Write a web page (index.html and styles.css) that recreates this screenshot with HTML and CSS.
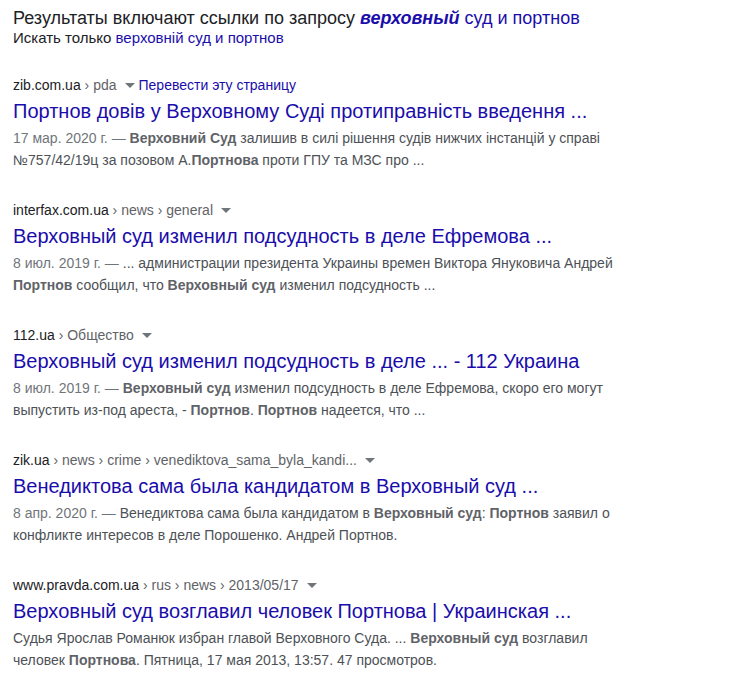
FILE: index.html
```html
<!DOCTYPE html>
<html lang="ru">
<head>
    <meta charset="UTF-8">
    <meta name="viewport" content="width=device-width, initial-scale=1.0">
    <title>верховний суд и портнов</title>
    <link rel="stylesheet" href="styles.css">
</head>
<body>
    <div class="spell">
        <p class="spell-main">Результаты включают ссылки по запросу <a href="#"><b><i>верховный</i></b> суд и портнов</a></p>
        <p class="spell-alt">Искать только <a href="#">верховній суд и портнов</a></p>
    </div>

    <div class="results">
        <div class="result">
            <div class="cite">zib.com.ua&nbsp;<span class="path">› pda</span><span class="arrow"></span><a class="translate" href="#">Перевести эту страницу</a></div>
            <a class="title" href="#">Портнов довів у Верховному Суді протиправність введення ...</a>
            <div class="snippet"><span class="date">17 мар. 2020 г. —</span> <b>Верховний Суд</b> залишив в силі рішення судів нижчих інстанцій у справі №757/42/19ц за позовом А.<b>Портнова</b> проти ГПУ та МЗС про ...</div>
        </div>

        <div class="result">
            <div class="cite">interfax.com.ua&nbsp;<span class="path">› news › general</span><span class="arrow"></span></div>
            <a class="title" href="#">Верховный суд изменил подсудность в деле Ефремова ...</a>
            <div class="snippet"><span class="date">8 июл. 2019 г. —</span> ... администрации президента Украины времен Виктора Януковича Андрей <b>Портнов</b> сообщил, что <b>Верховный суд</b> изменил подсудность ...</div>
        </div>

        <div class="result">
            <div class="cite">112.ua&nbsp;<span class="path">› Общество</span><span class="arrow"></span></div>
            <a class="title" href="#">Верховный суд изменил подсудность в деле ... - 112 Украина</a>
            <div class="snippet"><span class="date">8 июл. 2019 г. —</span> <b>Верховный суд</b> изменил подсудность в деле Ефремова, скоро его могут выпустить из-под ареста, - <b>Портнов</b>. <b>Портнов</b> надеется, что ...</div>
        </div>

        <div class="result">
            <div class="cite">zik.ua&nbsp;<span class="path">› news › crime › venediktova_sama_byla_kandi...</span><span class="arrow"></span></div>
            <a class="title" href="#">Венедиктова сама была кандидатом в Верховный суд ...</a>
            <div class="snippet"><span class="date">8 апр. 2020 г. —</span> Венедиктова сама была кандидатом в <b>Верховный суд</b>: <b>Портнов</b> заявил о конфликте интересов в деле Порошенко. Андрей Портнов.</div>
        </div>

        <div class="result">
            <div class="cite">www.pravda.com.ua&nbsp;<span class="path">› rus › news › 2013/05/17</span><span class="arrow"></span></div>
            <a class="title" href="#">Верховный суд возглавил человек Портнова | Украинская ...</a>
            <div class="snippet">Судья Ярослав Романюк избран главой Верховного Суда. ... <b>Верховный суд</b> возглавил человек <b>Портнова</b>. Пятница, 17 мая 2013, 13:57. 47 просмотров.</div>
        </div>
    </div>
</body>
</html>
```

FILE: styles.css
```css
body {
    margin: 0;
    padding: 7px 13px;
    font-family: Arial, "Liberation Sans", sans-serif;
    color: #202124;
    background: #fff;
}
a {
    color: #1a0dab;
    text-decoration: none;
}
p {
    margin: 0;
}
.spell-main {
    font-size: 18px;
    line-height: 22px;
}
.spell-alt {
    font-size: 15px;
    line-height: 18px;
}
.results {
    margin-top: 29px;
    width: 620px;
}
.result {
    margin-bottom: 30px;
}
.cite {
    font-size: 14px;
    line-height: 18px;
    color: #202124;
    display: flex;
    align-items: center;
    white-space: nowrap;
}
.cite .path {
    color: #5f6368;
}
.arrow {
    display: inline-block;
    width: 0;
    height: 0;
    border-left: 5px solid transparent;
    border-right: 5px solid transparent;
    border-top: 5px solid #70757a;
    margin: 1px 4px 0 8px;
}
.title {
    display: block;
    font-size: 20px;
    line-height: 26px;
    margin-top: 4px;
    white-space: nowrap;
}
.snippet {
    font-size: 14px;
    line-height: 22px;
    color: #4d5156;
    margin-top: 3px;
}
.snippet b {
    color: #5f6368;
}
.date {
    color: #70757a;
}
```
